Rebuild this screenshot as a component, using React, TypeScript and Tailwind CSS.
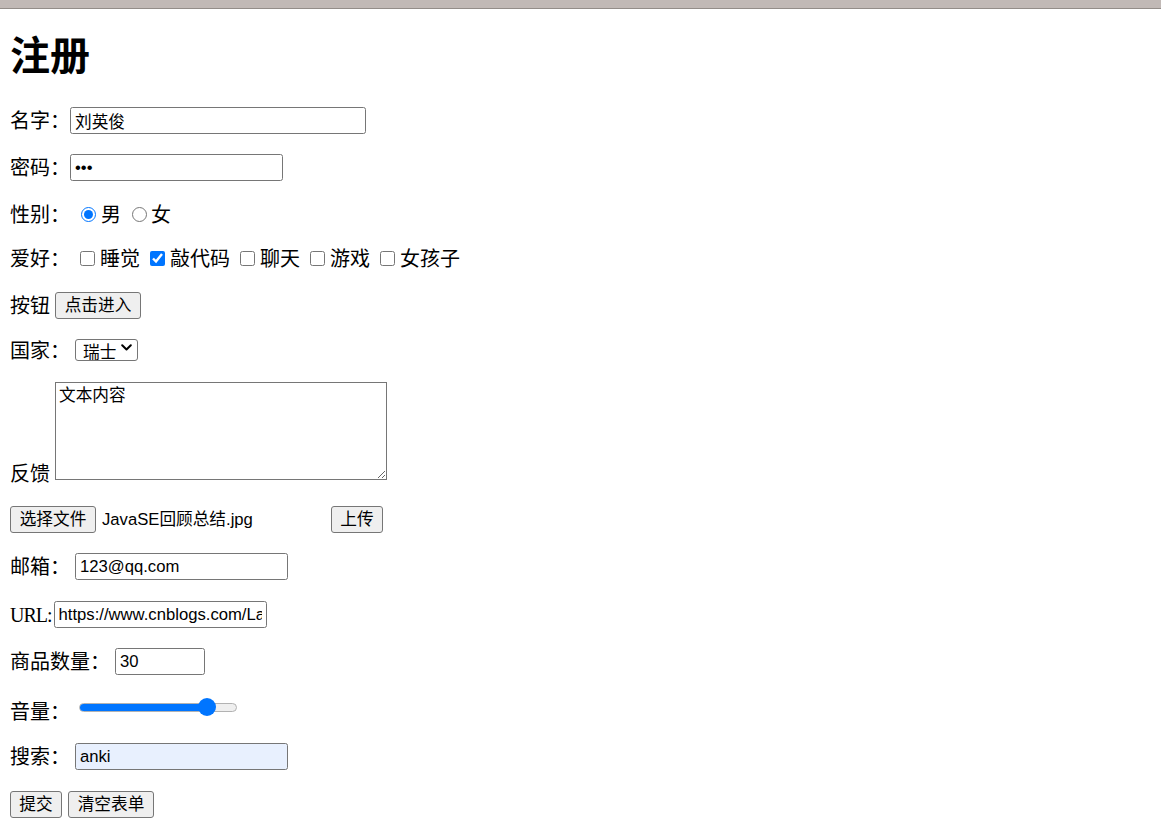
import React, { useState } from 'react';

const serif = "font-['Liberation_Serif','Noto_Sans_CJK_SC',serif]";
const sans = "font-['Liberation_Sans','Noto_Sans_CJK_SC',sans-serif]";

// default-looking form controls, sized like a 125% zoomed browser page
const field = `h-[27px] border border-[#767676] rounded-[2.5px] px-[4px] text-[16.67px] text-black outline-none ${sans}`;
const btn = `h-[27px] bg-[#efefef] border border-[#767676] rounded-[3px] text-[16.67px] text-black flex items-center justify-center ${sans}`;

function Slider({ value, max }: { value: number; max: number }) {
  const trackWidth = 158;
  const thumb = 18;
  const center = thumb / 2 + (value / max) * (trackWidth - thumb);
  return (
    <div className="relative ml-[9px] mb-[5px] w-[158px] h-[9px] rounded-full bg-[#efefef] border border-[#b2b2b2]">
      <div className="h-full rounded-full bg-[#0075ff]" style={{ width: center }} />
      <div
        className="absolute top-1/2 -translate-y-1/2 w-[18px] h-[18px] rounded-full bg-[#0075ff]"
        style={{ left: center - thumb / 2 }}
      />
    </div>
  );
}

export default function App() {
  const [gender, setGender] = useState('male');
  const [hobbies, setHobbies] = useState<string[]>(['code']);

  const toggleHobby = (id: string) =>
    setHobbies((prev) => (prev.includes(id) ? prev.filter((h) => h !== id) : [...prev, id]));

  const hobbyList = [
    { id: 'sleep', label: '睡觉' },
    { id: 'code', label: '敲代码' },
    { id: 'chat', label: '聊天' },
    { id: 'game', label: '游戏' },
    { id: 'girl', label: '女孩子' },
  ];

  return (
    <div className={`min-h-screen bg-white text-black text-[20px] ${serif}`}>
      {/* browser chrome strip */}
      <div className="h-[8px] bg-[#c1b9b6] border-b border-[#938d89] box-content" />

      <form className="pl-[10px] flex flex-col items-start" onSubmit={(e) => e.preventDefault()}>
        <h1 className="mt-[23px] h-[50px] leading-[50px] text-[40px] font-bold">注册</h1>

        <div className="mt-[25px] h-[27px] flex items-center">
          <span>名字：</span>
          <input type="text" defaultValue="刘英俊" className={`${field} bg-white w-[296px]`} />
        </div>

        <div className="mt-[20px] h-[27px] flex items-center">
          <span>密码：</span>
          <input type="password" defaultValue="123" className={`${field} bg-white w-[213px]`} />
        </div>

        <div className="mt-[20px] h-[27px] flex items-center">
          <span>性别：</span>
          <label className="flex items-center ml-[11px]">
            <input
              type="radio"
              name="gender"
              checked={gender === 'male'}
              onChange={() => setGender('male')}
              className="w-[15px] h-[15px] m-0 mb-[1px]"
            />
            <span className="ml-[5px]">男</span>
          </label>
          <label className="flex items-center ml-[11px]">
            <input
              type="radio"
              name="gender"
              checked={gender === 'female'}
              onChange={() => setGender('female')}
              className="w-[15px] h-[15px] m-0 mb-[1px]"
            />
            <span className="ml-[4px]">女</span>
          </label>
        </div>

        <div className="mt-[17px] h-[27px] flex items-center">
          <span>爱好：</span>
          {hobbyList.map((h) => (
            <label key={h.id} className="flex items-center ml-[10px]">
              <input
                type="checkbox"
                checked={hobbies.includes(h.id)}
                onChange={() => toggleHobby(h.id)}
                className="w-[15px] h-[15px] m-0 mb-[1px]"
              />
              <span className="ml-[5px]">{h.label}</span>
            </label>
          ))}
        </div>

        <div className="mt-[20px] h-[27px] flex items-center">
          <span>按钮</span>
          <button type="button" className={`${btn} ml-[5px] w-[86px]`}>
            点击进入
          </button>
        </div>

        <div className="mt-[18px] h-[27px] flex items-center">
          <span>国家：</span>
          <span className="relative ml-[5px]">
            <select
              defaultValue="ch"
              className={`appearance-none w-[63px] h-[22px] border border-[#767676] rounded-[3px] pl-[7px] bg-white text-[16.67px] text-black outline-none ${sans}`}
            >
              <option value="cn">中国</option>
              <option value="us">美国</option>
              <option value="ch">瑞士</option>
            </select>
            <svg
              className="pointer-events-none absolute right-[6px] top-[8px] w-[11px] h-[7px]"
              viewBox="0 0 11 7"
              fill="none"
            >
              <path d="M1.2 1.2l4.3 4.3 4.3-4.3" stroke="#000" strokeWidth="2" strokeLinecap="round" strokeLinejoin="round" />
            </svg>
          </span>
        </div>

        <div className="mt-[18px] flex items-end">
          <span className="mb-[-8px] leading-[27px]">反馈</span>
          <textarea
            defaultValue="文本内容"
            className="ml-[5px] w-[332px] h-[98px] border border-[#767676] px-[3px] py-[1px] text-[16.67px] leading-[1.25] bg-white outline-none font-['Noto_Sans_CJK_SC',monospace] resize"
          />
        </div>

        <div className="mt-[26px] h-[27px] flex items-center">
          <div className="w-[316px] flex items-center">
            <button type="button" className={`${btn} w-[86px]`}>
              选择文件
            </button>
            <span className={`ml-[6px] text-[16.67px] ${sans}`}>JavaSE回顾总结.jpg</span>
          </div>
          <button type="button" className={`${btn} ml-[5px] w-[52px]`}>
            上传
          </button>
        </div>

        <div className="mt-[20px] h-[27px] flex items-center">
          <span>邮箱：</span>
          <input type="email" defaultValue="123@qq.com" className={`${field} bg-white ml-[5px] w-[213px]`} />
        </div>

        <div className="mt-[21px] h-[27px] flex items-center">
          <span className="tracking-[-1px]">URL:</span>
          <input
            type="url"
            defaultValue="https://www.cnblogs.com/LanceLot/"
            className={`${field} bg-white ml-[2px] w-[213px]`}
          />
        </div>

        <div className="mt-[20px] h-[27px] flex items-center">
          <span>商品数量：</span>
          <input type="number" defaultValue={30} className={`${field} bg-white ml-[5px] w-[90px]`} />
        </div>

        <div className="mt-[21px] h-[27px] flex items-center">
          <span className="mt-[4px]">音量：</span>
          <Slider value={84} max={100} />
        </div>

        <div className="mt-[20px] h-[27px] flex items-center">
          <span>搜索：</span>
          <input type="search" defaultValue="anki" className={`${field} bg-[#e8f0fe] ml-[5px] w-[213px]`} />
        </div>

        <div className="mt-[21px] h-[27px] flex items-center">
          <button type="submit" className={`${btn} w-[52px]`}>
            提交
          </button>
          <button type="reset" className={`${btn} ml-[6px] w-[86px]`}>
            清空表单
          </button>
        </div>
      </form>
    </div>
  );
}
